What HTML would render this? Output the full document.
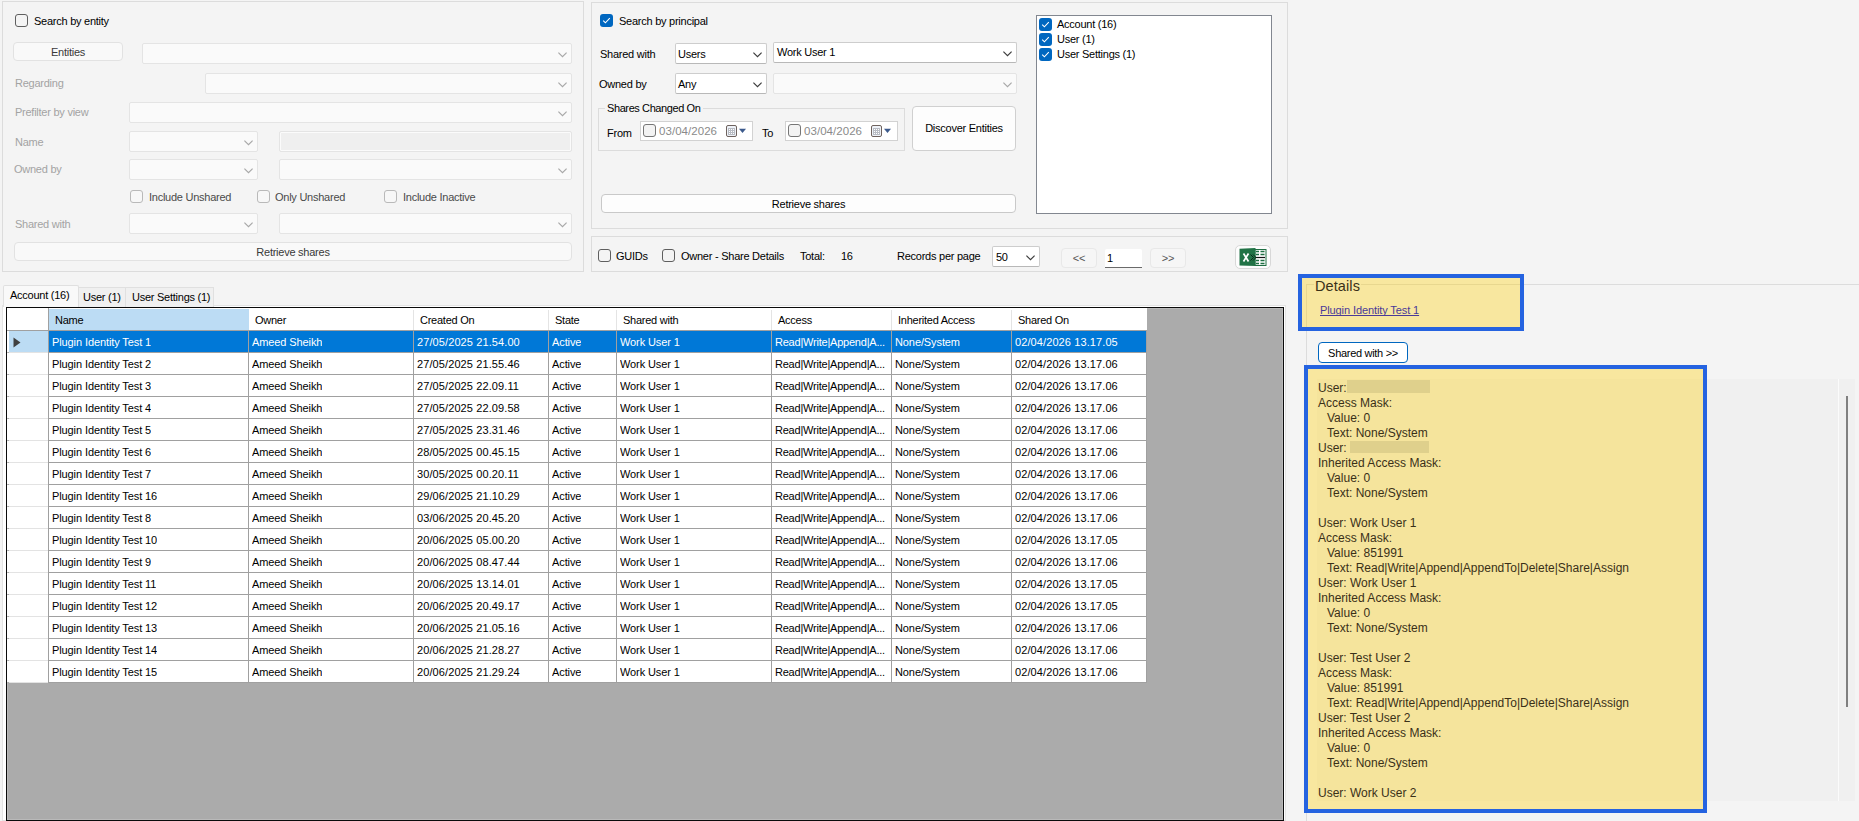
<!DOCTYPE html>
<html><head><meta charset="utf-8"><style>
*{box-sizing:border-box;margin:0;padding:0}
html,body{width:1859px;height:821px;overflow:hidden;background:#f4f4f4;font-family:"Liberation Sans",sans-serif;font-size:11px;color:#000}
.a{position:absolute}
.t{position:absolute;white-space:nowrap;line-height:14px;letter-spacing:-0.25px}
.grp{position:absolute;border:1px solid #dcdcdc}
.cb{position:absolute;width:13px;height:13px;border:1px solid #5f5f5f;border-radius:3px;background:#f4f4f4}
.cbd{border-color:#b9b9b9;background:#f7f7f7}
.cbk{position:absolute;width:13px;height:13px;border-radius:3px;background:#0067c0}
.cbk svg{position:absolute;left:0;top:0}
.combo{position:absolute;border:1px solid #e4e4e4;background:#fafafa;border-radius:2px}
.combo.en{border-color:#cdcdcd;background:#fff;border-bottom-color:#b8b8b8}
.chev{position:absolute;right:4px;top:7.5px}
.btn{position:absolute;border:1px solid #d0d0d0;border-radius:4px;background:#fbfbfb}
.btn span{position:absolute;left:0;right:0;text-align:center;white-space:nowrap;line-height:14px;letter-spacing:-0.25px}
.dis{color:#a3a3a3}
.g{position:absolute;background:#a0a0a0}
.cell{position:absolute;white-space:nowrap;line-height:14px;overflow:hidden;letter-spacing:-0.1px}
</style></head><body>
<div class="grp" style="left:2px;top:1px;width:582px;height:271px"></div>
<div class="cb" style="left:15px;top:14px"></div>
<div class="t" style="left:34px;top:14px;">Search by entity</div>
<div class="btn" style="left:13px;top:42px;width:110px;height:19px;border-color:#e2e2e2;background:#f9f9f9"><span style="top:2px;color:#3a3a3a">Entities</span></div>
<div class="combo" style="left:142px;top:43px;width:430px;height:21px;"><svg class="chev" width="9" height="6" viewBox="0 0 9 6"><path d="M0.4 0.6 L4.5 4.7 L8.6 0.6" stroke="#a8a8a8" stroke-width="1.15" fill="none"/></svg></div>
<div class="t" style="left:15px;top:76px;color:#a3a3a3">Regarding</div>
<div class="combo" style="left:205px;top:73px;width:367px;height:21px;"><svg class="chev" width="9" height="6" viewBox="0 0 9 6"><path d="M0.4 0.6 L4.5 4.7 L8.6 0.6" stroke="#a8a8a8" stroke-width="1.15" fill="none"/></svg></div>
<div class="t" style="left:15px;top:105px;color:#a3a3a3">Prefilter by view</div>
<div class="combo" style="left:129px;top:102px;width:443px;height:21px;"><svg class="chev" width="9" height="6" viewBox="0 0 9 6"><path d="M0.4 0.6 L4.5 4.7 L8.6 0.6" stroke="#a8a8a8" stroke-width="1.15" fill="none"/></svg></div>
<div class="t" style="left:15px;top:135px;color:#a3a3a3">Name</div>
<div class="combo" style="left:129px;top:131px;width:129px;height:21px;"><svg class="chev" width="9" height="6" viewBox="0 0 9 6"><path d="M0.4 0.6 L4.5 4.7 L8.6 0.6" stroke="#a8a8a8" stroke-width="1.15" fill="none"/></svg></div>
<div class="a" style="left:279px;top:131px;width:293px;height:21px;border:1px solid #e4e4e4;background:#efefef;border-radius:2px;box-shadow:inset 0 0 0 1px #fbfbfb"></div>
<div class="t" style="left:14px;top:162px;color:#a3a3a3">Owned by</div>
<div class="combo" style="left:129px;top:159px;width:129px;height:21px;"><svg class="chev" width="9" height="6" viewBox="0 0 9 6"><path d="M0.4 0.6 L4.5 4.7 L8.6 0.6" stroke="#a8a8a8" stroke-width="1.15" fill="none"/></svg></div>
<div class="combo" style="left:279px;top:159px;width:293px;height:21px;"><svg class="chev" width="9" height="6" viewBox="0 0 9 6"><path d="M0.4 0.6 L4.5 4.7 L8.6 0.6" stroke="#a8a8a8" stroke-width="1.15" fill="none"/></svg></div>
<div class="cb cbd" style="left:130px;top:190px"></div>
<div class="t" style="left:149px;top:190px;color:#4a4a4a">Include Unshared</div>
<div class="cb cbd" style="left:257px;top:190px"></div>
<div class="t" style="left:275px;top:190px;color:#4a4a4a">Only Unshared</div>
<div class="cb cbd" style="left:384px;top:190px"></div>
<div class="t" style="left:403px;top:190px;color:#4a4a4a">Include Inactive</div>
<div class="t" style="left:15px;top:217px;color:#a3a3a3">Shared with</div>
<div class="combo" style="left:129px;top:213px;width:129px;height:21px;"><svg class="chev" width="9" height="6" viewBox="0 0 9 6"><path d="M0.4 0.6 L4.5 4.7 L8.6 0.6" stroke="#a8a8a8" stroke-width="1.15" fill="none"/></svg></div>
<div class="combo" style="left:279px;top:213px;width:293px;height:21px;"><svg class="chev" width="9" height="6" viewBox="0 0 9 6"><path d="M0.4 0.6 L4.5 4.7 L8.6 0.6" stroke="#a8a8a8" stroke-width="1.15" fill="none"/></svg></div>
<div class="btn" style="left:14px;top:242px;width:558px;height:19px;border-color:#e2e2e2;background:#f9f9f9"><span style="top:2px;color:#3a3a3a">Retrieve shares</span></div>
<div class="grp" style="left:591px;top:2px;width:697px;height:227px"></div>
<div class="cbk" style="left:600px;top:14px"><svg width="13" height="13" viewBox="0 0 13 13"><path d="M3.2 6.6 L5.4 8.8 L9.8 4.2" stroke="#fff" stroke-width="1.1" fill="none"/></svg></div>
<div class="t" style="left:619px;top:14px;">Search by principal</div>
<div class="t" style="left:600px;top:47px;">Shared with</div>
<div class="combo en" style="left:675px;top:43px;width:92px;height:21px;"><span class="t" style="left:2px;top:3px">Users</span><svg class="chev" width="9" height="6" viewBox="0 0 9 6"><path d="M0.4 0.6 L4.5 4.7 L8.6 0.6" stroke="#3c3c3c" stroke-width="1.15" fill="none"/></svg></div>
<div class="combo en" style="left:773px;top:42px;width:244px;height:21px;"><span class="t" style="left:3px;top:2px">Work User 1</span><svg class="chev" width="9" height="6" viewBox="0 0 9 6"><path d="M0.4 0.6 L4.5 4.7 L8.6 0.6" stroke="#3c3c3c" stroke-width="1.15" fill="none"/></svg></div>
<div class="t" style="left:599px;top:77px;">Owned by</div>
<div class="combo en" style="left:675px;top:73px;width:92px;height:21px;"><span class="t" style="left:2px;top:3px">Any</span><svg class="chev" width="9" height="6" viewBox="0 0 9 6"><path d="M0.4 0.6 L4.5 4.7 L8.6 0.6" stroke="#3c3c3c" stroke-width="1.15" fill="none"/></svg></div>
<div class="combo" style="left:773px;top:73px;width:244px;height:21px;"><svg class="chev" width="9" height="6" viewBox="0 0 9 6"><path d="M0.4 0.6 L4.5 4.7 L8.6 0.6" stroke="#a8a8a8" stroke-width="1.15" fill="none"/></svg></div>
<div class="grp" style="left:598px;top:108px;width:307px;height:43px"></div>
<div class="t" style="left:605px;top:101px;padding:0 2px;background:#f4f4f4;letter-spacing:-0.4px">Shares Changed On</div>
<div class="t" style="left:607px;top:126px;">From</div>
<div class="t" style="left:762px;top:126px;">To</div>
<div class="a" style="left:640px;top:121px;width:113px;height:20px;border:1px solid #d2d2d2;background:#fff"></div>
<div class="cb" style="left:643px;top:124px;border-color:#767676;background:#f3f3f3"></div>
<div class="t" style="left:659px;top:124px;color:#8a8a8a;font-size:11.5px;letter-spacing:0.05px">03/04/2026</div>
<svg class="a" style="left:726px;top:125px" width="21" height="12" viewBox="0 0 21 12"><rect x="0.5" y="0.5" width="10" height="11" rx="1.5" fill="#eef2f8" stroke="#6e625e"/><rect x="2" y="3" width="7" height="7" fill="#b8bcc4"/><rect x="3" y="4" width="1" height="1" fill="#fff"/><rect x="3" y="6" width="1" height="1" fill="#fff"/><rect x="3" y="8" width="1" height="1" fill="#fff"/><rect x="5" y="4" width="1" height="1" fill="#fff"/><rect x="5" y="6" width="1" height="1" fill="#fff"/><rect x="5" y="8" width="1" height="1" fill="#fff"/><rect x="7" y="4" width="1" height="1" fill="#fff"/><rect x="7" y="6" width="1" height="1" fill="#fff"/><rect x="7" y="8" width="1" height="1" fill="#fff"/><path d="M13 3.8 L20 3.8 L16.5 8 Z" fill="#3c5a8c"/></svg>
<div class="a" style="left:785px;top:121px;width:113px;height:20px;border:1px solid #d2d2d2;background:#fff"></div>
<div class="cb" style="left:788px;top:124px;border-color:#767676;background:#f3f3f3"></div>
<div class="t" style="left:804px;top:124px;color:#8a8a8a;font-size:11.5px;letter-spacing:0.05px">03/04/2026</div>
<svg class="a" style="left:871px;top:125px" width="21" height="12" viewBox="0 0 21 12"><rect x="0.5" y="0.5" width="10" height="11" rx="1.5" fill="#eef2f8" stroke="#6e625e"/><rect x="2" y="3" width="7" height="7" fill="#b8bcc4"/><rect x="3" y="4" width="1" height="1" fill="#fff"/><rect x="3" y="6" width="1" height="1" fill="#fff"/><rect x="3" y="8" width="1" height="1" fill="#fff"/><rect x="5" y="4" width="1" height="1" fill="#fff"/><rect x="5" y="6" width="1" height="1" fill="#fff"/><rect x="5" y="8" width="1" height="1" fill="#fff"/><rect x="7" y="4" width="1" height="1" fill="#fff"/><rect x="7" y="6" width="1" height="1" fill="#fff"/><rect x="7" y="8" width="1" height="1" fill="#fff"/><path d="M13 3.8 L20 3.8 L16.5 8 Z" fill="#3c5a8c"/></svg>
<div class="btn" style="left:912px;top:106px;width:104px;height:45px;border-color:#d0d0d0;background:#fdfdfd"><span style="top:14px;">Discover Entities</span></div>
<div class="btn" style="left:601px;top:194px;width:415px;height:19px;border-color:#c9c9c9;background:#fdfdfd"><span style="top:2px;">Retrieve shares</span></div>
<div class="a" style="left:1036px;top:15px;width:236px;height:199px;border:1px solid #828790;background:#fff"></div>
<div class="cbk" style="left:1039px;top:18px"><svg width="13" height="13" viewBox="0 0 13 13"><path d="M3.2 6.6 L5.4 8.8 L9.8 4.2" stroke="#fff" stroke-width="1.1" fill="none"/></svg></div>
<div class="t" style="left:1057px;top:17px;">Account (16)</div>
<div class="cbk" style="left:1039px;top:33px"><svg width="13" height="13" viewBox="0 0 13 13"><path d="M3.2 6.6 L5.4 8.8 L9.8 4.2" stroke="#fff" stroke-width="1.1" fill="none"/></svg></div>
<div class="t" style="left:1057px;top:32px;">User (1)</div>
<div class="cbk" style="left:1039px;top:48px"><svg width="13" height="13" viewBox="0 0 13 13"><path d="M3.2 6.6 L5.4 8.8 L9.8 4.2" stroke="#fff" stroke-width="1.1" fill="none"/></svg></div>
<div class="t" style="left:1057px;top:47px;">User Settings (1)</div>
<div class="grp" style="left:591px;top:236px;width:697px;height:36px"></div>
<div class="cb" style="left:598px;top:249px"></div>
<div class="t" style="left:616px;top:249px;">GUIDs</div>
<div class="cb" style="left:662px;top:249px"></div>
<div class="t" style="left:681px;top:249px;">Owner - Share Details</div>
<div class="t" style="left:800px;top:249px;">Total:</div>
<div class="t" style="left:841px;top:249px;">16</div>
<div class="t" style="left:897px;top:249px;">Records per page</div>
<div class="combo en" style="left:992px;top:246px;width:48px;height:21px;"><span class="t" style="left:3px;top:3px">50</span><svg class="chev" width="9" height="6" viewBox="0 0 9 6"><path d="M0.4 0.6 L4.5 4.7 L8.6 0.6" stroke="#3c3c3c" stroke-width="1.15" fill="none"/></svg></div>
<div class="btn" style="left:1061px;top:248px;width:36px;height:20px;border-color:#e8e8e8;background:#f6f6f6"><span style="top:2px;color:#555">&lt;&lt;</span></div>
<div class="a" style="left:1105px;top:249px;width:37px;height:19px;background:#fff;border-bottom:1px solid #6a6a6a;border-radius:2px 2px 0 0"></div>
<div class="t" style="left:1107px;top:251px;">1</div>
<div class="btn" style="left:1150px;top:248px;width:36px;height:20px;border-color:#e8e8e8;background:#f6f6f6"><span style="top:2px;color:#555">&gt;&gt;</span></div>
<div class="btn" style="left:1235px;top:245px;width:36px;height:24px;border-color:#d8d8d8;background:#fdfdfd;border-radius:5px"><span style="top:0px;"></span></div>
<svg class="a" style="left:1239px;top:247px" width="29" height="21" viewBox="0 0 29 21"><rect x="16" y="2.5" width="11" height="16" fill="#fff" stroke="#1f6f43" stroke-width="1"/><path d="M17 4.5h3M21.5 4.5h4M17 7.5h3M21.5 7.5h4M17 13.5h3M21.5 13.5h4M17 16.5h3M21.5 16.5h4" stroke="#1f6f43" stroke-width="1.6"/><path d="M16 10.5h10" stroke="#111" stroke-width="1.2"/><path d="M0.5 1.8 L16.5 1 L16.5 19 L0.5 18.6 Z" fill="#217346"/><path d="M4.5 6.5 L9.5 14.5 M9.5 6.5 L4.5 14.5" stroke="#fff" stroke-width="1.7"/><path d="M11.5 7.5 L14.5 10.5 L11.5 13.5 M14 7.5 L17 10.5 L14 13.5" stroke="#0a2a18" stroke-width="1" fill="none"/></svg>
<div class="a" style="left:2px;top:305px;width:1284px;height:516px;border:1px solid #e3e3e3;background:#fff"></div>
<div class="a" style="left:3px;top:285px;width:76px;height:22px;border:1px solid #e0e0e0;border-bottom:none;background:#f9f9f9;border-radius:2px 2px 0 0"></div>
<div class="t" style="left:10px;top:288px;">Account (16)</div>
<div class="a" style="left:78px;top:287px;width:48px;height:20px;border:1px solid #e0e0e0;border-bottom:none;background:#f0f0f0"></div>
<div class="t" style="left:83px;top:290px;">User (1)</div>
<div class="a" style="left:125px;top:287px;width:89px;height:20px;border:1px solid #e0e0e0;border-bottom:none;background:#f0f0f0"></div>
<div class="t" style="left:132px;top:290px;">User Settings (1)</div>
<div class="a" style="left:6px;top:307px;width:1278px;height:514px;border:1px solid #0a0a0a;background:#ababab;box-shadow:inset 1px 1px 0 #b9b9b9, inset -1px -1px 0 #b9b9b9"></div>
<div class="a" style="left:7px;top:308px;width:1140px;height:22px;background:#fff"></div>
<div class="a" style="left:49px;top:309px;width:200px;height:21px;background:#bcdcf4"></div>
<div class="a" style="left:7px;top:330px;width:1140px;height:1px;background:#a0a0a0"></div>
<div class="a" style="left:48px;top:308px;width:1px;height:23px;background:#a0a0a0"></div>
<div class="a" style="left:413px;top:310px;width:1px;height:20px;background:#e4e4e4"></div>
<div class="a" style="left:548px;top:310px;width:1px;height:20px;background:#e4e4e4"></div>
<div class="a" style="left:616px;top:310px;width:1px;height:20px;background:#e4e4e4"></div>
<div class="a" style="left:771px;top:310px;width:1px;height:20px;background:#e4e4e4"></div>
<div class="a" style="left:891px;top:310px;width:1px;height:20px;background:#e4e4e4"></div>
<div class="a" style="left:1011px;top:310px;width:1px;height:20px;background:#e4e4e4"></div>
<div class="t" style="left:55px;top:313px;">Name</div>
<div class="t" style="left:255px;top:313px;">Owner</div>
<div class="t" style="left:420px;top:313px;">Created On</div>
<div class="t" style="left:555px;top:313px;">State</div>
<div class="t" style="left:623px;top:313px;">Shared with</div>
<div class="t" style="left:778px;top:313px;">Access</div>
<div class="t" style="left:898px;top:313px;">Inherited Access</div>
<div class="t" style="left:1018px;top:313px;">Shared On</div>
<div class="a" style="left:7px;top:331px;width:41px;height:21px;background:#fff"></div>
<div class="a" style="left:9px;top:331px;width:39px;height:21px;background:#bcdcf4"></div>
<svg class="a" style="left:13px;top:337px" width="8" height="11" viewBox="0 0 8 11"><path d="M0.5 0.5 L7.5 5.5 L0.5 10.5 Z" fill="#404040"/></svg>
<div class="a" style="left:9px;top:352px;width:39px;height:1px;background:#e3e3e3"></div>
<div class="a" style="left:49px;top:331px;width:1097px;height:21px;background:#0078d7"></div>
<div class="a" style="left:49px;top:352px;width:1098px;height:1px;background:#a0a0a0"></div>
<div class="cell" style="left:52px;top:335px;color:#fff;letter-spacing:-0.1px">Plugin Identity Test 1</div>
<div class="cell" style="left:252px;top:335px;color:#fff;letter-spacing:-0.1px">Ameed Sheikh</div>
<div class="cell" style="left:417px;top:335px;color:#fff;letter-spacing:0.1px">27/05/2025 21.54.00</div>
<div class="cell" style="left:552px;top:335px;color:#fff;letter-spacing:-0.1px">Active</div>
<div class="cell" style="left:620px;top:335px;color:#fff;letter-spacing:-0.1px">Work User 1</div>
<div class="cell" style="left:775px;top:335px;color:#fff;letter-spacing:-0.22px">Read|Write|Append|A...</div>
<div class="cell" style="left:895px;top:335px;color:#fff;letter-spacing:-0.1px">None/System</div>
<div class="cell" style="left:1015px;top:335px;color:#fff;letter-spacing:0.1px">02/04/2026 13.17.05</div>
<div class="a" style="left:7px;top:353px;width:41px;height:21px;background:#fff"></div>
<div class="a" style="left:9px;top:374px;width:39px;height:1px;background:#e3e3e3"></div>
<div class="a" style="left:49px;top:353px;width:1097px;height:21px;background:#fff"></div>
<div class="a" style="left:49px;top:374px;width:1098px;height:1px;background:#a0a0a0"></div>
<div class="cell" style="left:52px;top:357px;color:#000;letter-spacing:-0.1px">Plugin Identity Test 2</div>
<div class="cell" style="left:252px;top:357px;color:#000;letter-spacing:-0.1px">Ameed Sheikh</div>
<div class="cell" style="left:417px;top:357px;color:#000;letter-spacing:0.1px">27/05/2025 21.55.46</div>
<div class="cell" style="left:552px;top:357px;color:#000;letter-spacing:-0.1px">Active</div>
<div class="cell" style="left:620px;top:357px;color:#000;letter-spacing:-0.1px">Work User 1</div>
<div class="cell" style="left:775px;top:357px;color:#000;letter-spacing:-0.22px">Read|Write|Append|A...</div>
<div class="cell" style="left:895px;top:357px;color:#000;letter-spacing:-0.1px">None/System</div>
<div class="cell" style="left:1015px;top:357px;color:#000;letter-spacing:0.1px">02/04/2026 13.17.06</div>
<div class="a" style="left:7px;top:375px;width:41px;height:21px;background:#fff"></div>
<div class="a" style="left:9px;top:396px;width:39px;height:1px;background:#e3e3e3"></div>
<div class="a" style="left:49px;top:375px;width:1097px;height:21px;background:#fff"></div>
<div class="a" style="left:49px;top:396px;width:1098px;height:1px;background:#a0a0a0"></div>
<div class="cell" style="left:52px;top:379px;color:#000;letter-spacing:-0.1px">Plugin Identity Test 3</div>
<div class="cell" style="left:252px;top:379px;color:#000;letter-spacing:-0.1px">Ameed Sheikh</div>
<div class="cell" style="left:417px;top:379px;color:#000;letter-spacing:0.1px">27/05/2025 22.09.11</div>
<div class="cell" style="left:552px;top:379px;color:#000;letter-spacing:-0.1px">Active</div>
<div class="cell" style="left:620px;top:379px;color:#000;letter-spacing:-0.1px">Work User 1</div>
<div class="cell" style="left:775px;top:379px;color:#000;letter-spacing:-0.22px">Read|Write|Append|A...</div>
<div class="cell" style="left:895px;top:379px;color:#000;letter-spacing:-0.1px">None/System</div>
<div class="cell" style="left:1015px;top:379px;color:#000;letter-spacing:0.1px">02/04/2026 13.17.06</div>
<div class="a" style="left:7px;top:397px;width:41px;height:21px;background:#fff"></div>
<div class="a" style="left:9px;top:418px;width:39px;height:1px;background:#e3e3e3"></div>
<div class="a" style="left:49px;top:397px;width:1097px;height:21px;background:#fff"></div>
<div class="a" style="left:49px;top:418px;width:1098px;height:1px;background:#a0a0a0"></div>
<div class="cell" style="left:52px;top:401px;color:#000;letter-spacing:-0.1px">Plugin Identity Test 4</div>
<div class="cell" style="left:252px;top:401px;color:#000;letter-spacing:-0.1px">Ameed Sheikh</div>
<div class="cell" style="left:417px;top:401px;color:#000;letter-spacing:0.1px">27/05/2025 22.09.58</div>
<div class="cell" style="left:552px;top:401px;color:#000;letter-spacing:-0.1px">Active</div>
<div class="cell" style="left:620px;top:401px;color:#000;letter-spacing:-0.1px">Work User 1</div>
<div class="cell" style="left:775px;top:401px;color:#000;letter-spacing:-0.22px">Read|Write|Append|A...</div>
<div class="cell" style="left:895px;top:401px;color:#000;letter-spacing:-0.1px">None/System</div>
<div class="cell" style="left:1015px;top:401px;color:#000;letter-spacing:0.1px">02/04/2026 13.17.06</div>
<div class="a" style="left:7px;top:419px;width:41px;height:21px;background:#fff"></div>
<div class="a" style="left:9px;top:440px;width:39px;height:1px;background:#e3e3e3"></div>
<div class="a" style="left:49px;top:419px;width:1097px;height:21px;background:#fff"></div>
<div class="a" style="left:49px;top:440px;width:1098px;height:1px;background:#a0a0a0"></div>
<div class="cell" style="left:52px;top:423px;color:#000;letter-spacing:-0.1px">Plugin Identity Test 5</div>
<div class="cell" style="left:252px;top:423px;color:#000;letter-spacing:-0.1px">Ameed Sheikh</div>
<div class="cell" style="left:417px;top:423px;color:#000;letter-spacing:0.1px">27/05/2025 23.31.46</div>
<div class="cell" style="left:552px;top:423px;color:#000;letter-spacing:-0.1px">Active</div>
<div class="cell" style="left:620px;top:423px;color:#000;letter-spacing:-0.1px">Work User 1</div>
<div class="cell" style="left:775px;top:423px;color:#000;letter-spacing:-0.22px">Read|Write|Append|A...</div>
<div class="cell" style="left:895px;top:423px;color:#000;letter-spacing:-0.1px">None/System</div>
<div class="cell" style="left:1015px;top:423px;color:#000;letter-spacing:0.1px">02/04/2026 13.17.06</div>
<div class="a" style="left:7px;top:441px;width:41px;height:21px;background:#fff"></div>
<div class="a" style="left:9px;top:462px;width:39px;height:1px;background:#e3e3e3"></div>
<div class="a" style="left:49px;top:441px;width:1097px;height:21px;background:#fff"></div>
<div class="a" style="left:49px;top:462px;width:1098px;height:1px;background:#a0a0a0"></div>
<div class="cell" style="left:52px;top:445px;color:#000;letter-spacing:-0.1px">Plugin Identity Test 6</div>
<div class="cell" style="left:252px;top:445px;color:#000;letter-spacing:-0.1px">Ameed Sheikh</div>
<div class="cell" style="left:417px;top:445px;color:#000;letter-spacing:0.1px">28/05/2025 00.45.15</div>
<div class="cell" style="left:552px;top:445px;color:#000;letter-spacing:-0.1px">Active</div>
<div class="cell" style="left:620px;top:445px;color:#000;letter-spacing:-0.1px">Work User 1</div>
<div class="cell" style="left:775px;top:445px;color:#000;letter-spacing:-0.22px">Read|Write|Append|A...</div>
<div class="cell" style="left:895px;top:445px;color:#000;letter-spacing:-0.1px">None/System</div>
<div class="cell" style="left:1015px;top:445px;color:#000;letter-spacing:0.1px">02/04/2026 13.17.06</div>
<div class="a" style="left:7px;top:463px;width:41px;height:21px;background:#fff"></div>
<div class="a" style="left:9px;top:484px;width:39px;height:1px;background:#e3e3e3"></div>
<div class="a" style="left:49px;top:463px;width:1097px;height:21px;background:#fff"></div>
<div class="a" style="left:49px;top:484px;width:1098px;height:1px;background:#a0a0a0"></div>
<div class="cell" style="left:52px;top:467px;color:#000;letter-spacing:-0.1px">Plugin Identity Test 7</div>
<div class="cell" style="left:252px;top:467px;color:#000;letter-spacing:-0.1px">Ameed Sheikh</div>
<div class="cell" style="left:417px;top:467px;color:#000;letter-spacing:0.1px">30/05/2025 00.20.11</div>
<div class="cell" style="left:552px;top:467px;color:#000;letter-spacing:-0.1px">Active</div>
<div class="cell" style="left:620px;top:467px;color:#000;letter-spacing:-0.1px">Work User 1</div>
<div class="cell" style="left:775px;top:467px;color:#000;letter-spacing:-0.22px">Read|Write|Append|A...</div>
<div class="cell" style="left:895px;top:467px;color:#000;letter-spacing:-0.1px">None/System</div>
<div class="cell" style="left:1015px;top:467px;color:#000;letter-spacing:0.1px">02/04/2026 13.17.06</div>
<div class="a" style="left:7px;top:485px;width:41px;height:21px;background:#fff"></div>
<div class="a" style="left:9px;top:506px;width:39px;height:1px;background:#e3e3e3"></div>
<div class="a" style="left:49px;top:485px;width:1097px;height:21px;background:#fff"></div>
<div class="a" style="left:49px;top:506px;width:1098px;height:1px;background:#a0a0a0"></div>
<div class="cell" style="left:52px;top:489px;color:#000;letter-spacing:-0.1px">Plugin Identity Test 16</div>
<div class="cell" style="left:252px;top:489px;color:#000;letter-spacing:-0.1px">Ameed Sheikh</div>
<div class="cell" style="left:417px;top:489px;color:#000;letter-spacing:0.1px">29/06/2025 21.10.29</div>
<div class="cell" style="left:552px;top:489px;color:#000;letter-spacing:-0.1px">Active</div>
<div class="cell" style="left:620px;top:489px;color:#000;letter-spacing:-0.1px">Work User 1</div>
<div class="cell" style="left:775px;top:489px;color:#000;letter-spacing:-0.22px">Read|Write|Append|A...</div>
<div class="cell" style="left:895px;top:489px;color:#000;letter-spacing:-0.1px">None/System</div>
<div class="cell" style="left:1015px;top:489px;color:#000;letter-spacing:0.1px">02/04/2026 13.17.06</div>
<div class="a" style="left:7px;top:507px;width:41px;height:21px;background:#fff"></div>
<div class="a" style="left:9px;top:528px;width:39px;height:1px;background:#e3e3e3"></div>
<div class="a" style="left:49px;top:507px;width:1097px;height:21px;background:#fff"></div>
<div class="a" style="left:49px;top:528px;width:1098px;height:1px;background:#a0a0a0"></div>
<div class="cell" style="left:52px;top:511px;color:#000;letter-spacing:-0.1px">Plugin Identity Test 8</div>
<div class="cell" style="left:252px;top:511px;color:#000;letter-spacing:-0.1px">Ameed Sheikh</div>
<div class="cell" style="left:417px;top:511px;color:#000;letter-spacing:0.1px">03/06/2025 20.45.20</div>
<div class="cell" style="left:552px;top:511px;color:#000;letter-spacing:-0.1px">Active</div>
<div class="cell" style="left:620px;top:511px;color:#000;letter-spacing:-0.1px">Work User 1</div>
<div class="cell" style="left:775px;top:511px;color:#000;letter-spacing:-0.22px">Read|Write|Append|A...</div>
<div class="cell" style="left:895px;top:511px;color:#000;letter-spacing:-0.1px">None/System</div>
<div class="cell" style="left:1015px;top:511px;color:#000;letter-spacing:0.1px">02/04/2026 13.17.06</div>
<div class="a" style="left:7px;top:529px;width:41px;height:21px;background:#fff"></div>
<div class="a" style="left:9px;top:550px;width:39px;height:1px;background:#e3e3e3"></div>
<div class="a" style="left:49px;top:529px;width:1097px;height:21px;background:#fff"></div>
<div class="a" style="left:49px;top:550px;width:1098px;height:1px;background:#a0a0a0"></div>
<div class="cell" style="left:52px;top:533px;color:#000;letter-spacing:-0.1px">Plugin Identity Test 10</div>
<div class="cell" style="left:252px;top:533px;color:#000;letter-spacing:-0.1px">Ameed Sheikh</div>
<div class="cell" style="left:417px;top:533px;color:#000;letter-spacing:0.1px">20/06/2025 05.00.20</div>
<div class="cell" style="left:552px;top:533px;color:#000;letter-spacing:-0.1px">Active</div>
<div class="cell" style="left:620px;top:533px;color:#000;letter-spacing:-0.1px">Work User 1</div>
<div class="cell" style="left:775px;top:533px;color:#000;letter-spacing:-0.22px">Read|Write|Append|A...</div>
<div class="cell" style="left:895px;top:533px;color:#000;letter-spacing:-0.1px">None/System</div>
<div class="cell" style="left:1015px;top:533px;color:#000;letter-spacing:0.1px">02/04/2026 13.17.05</div>
<div class="a" style="left:7px;top:551px;width:41px;height:21px;background:#fff"></div>
<div class="a" style="left:9px;top:572px;width:39px;height:1px;background:#e3e3e3"></div>
<div class="a" style="left:49px;top:551px;width:1097px;height:21px;background:#fff"></div>
<div class="a" style="left:49px;top:572px;width:1098px;height:1px;background:#a0a0a0"></div>
<div class="cell" style="left:52px;top:555px;color:#000;letter-spacing:-0.1px">Plugin Identity Test 9</div>
<div class="cell" style="left:252px;top:555px;color:#000;letter-spacing:-0.1px">Ameed Sheikh</div>
<div class="cell" style="left:417px;top:555px;color:#000;letter-spacing:0.1px">20/06/2025 08.47.44</div>
<div class="cell" style="left:552px;top:555px;color:#000;letter-spacing:-0.1px">Active</div>
<div class="cell" style="left:620px;top:555px;color:#000;letter-spacing:-0.1px">Work User 1</div>
<div class="cell" style="left:775px;top:555px;color:#000;letter-spacing:-0.22px">Read|Write|Append|A...</div>
<div class="cell" style="left:895px;top:555px;color:#000;letter-spacing:-0.1px">None/System</div>
<div class="cell" style="left:1015px;top:555px;color:#000;letter-spacing:0.1px">02/04/2026 13.17.06</div>
<div class="a" style="left:7px;top:573px;width:41px;height:21px;background:#fff"></div>
<div class="a" style="left:9px;top:594px;width:39px;height:1px;background:#e3e3e3"></div>
<div class="a" style="left:49px;top:573px;width:1097px;height:21px;background:#fff"></div>
<div class="a" style="left:49px;top:594px;width:1098px;height:1px;background:#a0a0a0"></div>
<div class="cell" style="left:52px;top:577px;color:#000;letter-spacing:-0.1px">Plugin Identity Test 11</div>
<div class="cell" style="left:252px;top:577px;color:#000;letter-spacing:-0.1px">Ameed Sheikh</div>
<div class="cell" style="left:417px;top:577px;color:#000;letter-spacing:0.1px">20/06/2025 13.14.01</div>
<div class="cell" style="left:552px;top:577px;color:#000;letter-spacing:-0.1px">Active</div>
<div class="cell" style="left:620px;top:577px;color:#000;letter-spacing:-0.1px">Work User 1</div>
<div class="cell" style="left:775px;top:577px;color:#000;letter-spacing:-0.22px">Read|Write|Append|A...</div>
<div class="cell" style="left:895px;top:577px;color:#000;letter-spacing:-0.1px">None/System</div>
<div class="cell" style="left:1015px;top:577px;color:#000;letter-spacing:0.1px">02/04/2026 13.17.05</div>
<div class="a" style="left:7px;top:595px;width:41px;height:21px;background:#fff"></div>
<div class="a" style="left:9px;top:616px;width:39px;height:1px;background:#e3e3e3"></div>
<div class="a" style="left:49px;top:595px;width:1097px;height:21px;background:#fff"></div>
<div class="a" style="left:49px;top:616px;width:1098px;height:1px;background:#a0a0a0"></div>
<div class="cell" style="left:52px;top:599px;color:#000;letter-spacing:-0.1px">Plugin Identity Test 12</div>
<div class="cell" style="left:252px;top:599px;color:#000;letter-spacing:-0.1px">Ameed Sheikh</div>
<div class="cell" style="left:417px;top:599px;color:#000;letter-spacing:0.1px">20/06/2025 20.49.17</div>
<div class="cell" style="left:552px;top:599px;color:#000;letter-spacing:-0.1px">Active</div>
<div class="cell" style="left:620px;top:599px;color:#000;letter-spacing:-0.1px">Work User 1</div>
<div class="cell" style="left:775px;top:599px;color:#000;letter-spacing:-0.22px">Read|Write|Append|A...</div>
<div class="cell" style="left:895px;top:599px;color:#000;letter-spacing:-0.1px">None/System</div>
<div class="cell" style="left:1015px;top:599px;color:#000;letter-spacing:0.1px">02/04/2026 13.17.05</div>
<div class="a" style="left:7px;top:617px;width:41px;height:21px;background:#fff"></div>
<div class="a" style="left:9px;top:638px;width:39px;height:1px;background:#e3e3e3"></div>
<div class="a" style="left:49px;top:617px;width:1097px;height:21px;background:#fff"></div>
<div class="a" style="left:49px;top:638px;width:1098px;height:1px;background:#a0a0a0"></div>
<div class="cell" style="left:52px;top:621px;color:#000;letter-spacing:-0.1px">Plugin Identity Test 13</div>
<div class="cell" style="left:252px;top:621px;color:#000;letter-spacing:-0.1px">Ameed Sheikh</div>
<div class="cell" style="left:417px;top:621px;color:#000;letter-spacing:0.1px">20/06/2025 21.05.16</div>
<div class="cell" style="left:552px;top:621px;color:#000;letter-spacing:-0.1px">Active</div>
<div class="cell" style="left:620px;top:621px;color:#000;letter-spacing:-0.1px">Work User 1</div>
<div class="cell" style="left:775px;top:621px;color:#000;letter-spacing:-0.22px">Read|Write|Append|A...</div>
<div class="cell" style="left:895px;top:621px;color:#000;letter-spacing:-0.1px">None/System</div>
<div class="cell" style="left:1015px;top:621px;color:#000;letter-spacing:0.1px">02/04/2026 13.17.06</div>
<div class="a" style="left:7px;top:639px;width:41px;height:21px;background:#fff"></div>
<div class="a" style="left:9px;top:660px;width:39px;height:1px;background:#e3e3e3"></div>
<div class="a" style="left:49px;top:639px;width:1097px;height:21px;background:#fff"></div>
<div class="a" style="left:49px;top:660px;width:1098px;height:1px;background:#a0a0a0"></div>
<div class="cell" style="left:52px;top:643px;color:#000;letter-spacing:-0.1px">Plugin Identity Test 14</div>
<div class="cell" style="left:252px;top:643px;color:#000;letter-spacing:-0.1px">Ameed Sheikh</div>
<div class="cell" style="left:417px;top:643px;color:#000;letter-spacing:0.1px">20/06/2025 21.28.27</div>
<div class="cell" style="left:552px;top:643px;color:#000;letter-spacing:-0.1px">Active</div>
<div class="cell" style="left:620px;top:643px;color:#000;letter-spacing:-0.1px">Work User 1</div>
<div class="cell" style="left:775px;top:643px;color:#000;letter-spacing:-0.22px">Read|Write|Append|A...</div>
<div class="cell" style="left:895px;top:643px;color:#000;letter-spacing:-0.1px">None/System</div>
<div class="cell" style="left:1015px;top:643px;color:#000;letter-spacing:0.1px">02/04/2026 13.17.06</div>
<div class="a" style="left:7px;top:661px;width:41px;height:21px;background:#fff"></div>
<div class="a" style="left:9px;top:682px;width:39px;height:1px;background:#e3e3e3"></div>
<div class="a" style="left:49px;top:661px;width:1097px;height:21px;background:#fff"></div>
<div class="a" style="left:49px;top:682px;width:1098px;height:1px;background:#a0a0a0"></div>
<div class="cell" style="left:52px;top:665px;color:#000;letter-spacing:-0.1px">Plugin Identity Test 15</div>
<div class="cell" style="left:252px;top:665px;color:#000;letter-spacing:-0.1px">Ameed Sheikh</div>
<div class="cell" style="left:417px;top:665px;color:#000;letter-spacing:0.1px">20/06/2025 21.29.24</div>
<div class="cell" style="left:552px;top:665px;color:#000;letter-spacing:-0.1px">Active</div>
<div class="cell" style="left:620px;top:665px;color:#000;letter-spacing:-0.1px">Work User 1</div>
<div class="cell" style="left:775px;top:665px;color:#000;letter-spacing:-0.22px">Read|Write|Append|A...</div>
<div class="cell" style="left:895px;top:665px;color:#000;letter-spacing:-0.1px">None/System</div>
<div class="cell" style="left:1015px;top:665px;color:#000;letter-spacing:0.1px">02/04/2026 13.17.06</div>
<div class="a" style="left:48px;top:331px;width:1px;height:352px;background:#a0a0a0"></div>
<div class="a" style="left:248px;top:331px;width:1px;height:352px;background:#a0a0a0"></div>
<div class="a" style="left:413px;top:331px;width:1px;height:352px;background:#a0a0a0"></div>
<div class="a" style="left:548px;top:331px;width:1px;height:352px;background:#a0a0a0"></div>
<div class="a" style="left:616px;top:331px;width:1px;height:352px;background:#a0a0a0"></div>
<div class="a" style="left:771px;top:331px;width:1px;height:352px;background:#a0a0a0"></div>
<div class="a" style="left:891px;top:331px;width:1px;height:352px;background:#a0a0a0"></div>
<div class="a" style="left:1011px;top:331px;width:1px;height:352px;background:#a0a0a0"></div>
<div class="a" style="left:1146px;top:331px;width:1px;height:352px;background:#a0a0a0"></div>
<div class="a" style="left:1306px;top:284px;width:1px;height:537px;background:#dcdcdc"></div>
<div class="a" style="left:1306px;top:284px;width:8px;height:1px;background:#dcdcdc"></div>
<div class="a" style="left:1361px;top:284px;width:498px;height:1px;background:#dcdcdc"></div>
<div class="a" style="left:1302px;top:278px;width:218px;height:49px;background:rgba(255,208,8,0.36)"></div>
<div class="t" style="left:1315px;top:277px;font-size:14.5px;line-height:18px;color:#3a3018;letter-spacing:0.1px">Details</div>
<div class="t" style="left:1320px;top:303px;color:#4a3a98;letter-spacing:-0.1px;text-decoration:underline;text-decoration-skip-ink:none">Plugin Identity Test 1</div>
<div class="btn" style="left:1318px;top:342px;width:90px;height:21px;border-color:#0067c0;background:#fff;border-radius:4px"><span style="top:3px;letter-spacing:-0.3px">Shared with &gt;&gt;</span></div>
<div class="a" style="left:1317px;top:379px;width:538px;height:422px;background:#f0f0f0"></div>
<div class="a" style="left:1838px;top:379px;width:1px;height:422px;background:#fbfbfb"></div>
<div class="a" style="left:1846px;top:396px;width:2px;height:311px;background:#808080"></div>
<div class="a" style="left:1308px;top:369px;width:395px;height:440px;background:rgba(255,208,8,0.36)"></div>
<div class="t" style="left:1318px;top:381px;font-size:12px;line-height:15px;letter-spacing:0;color:#3a3018">User:</div>
<div class="t" style="left:1318px;top:396px;font-size:12px;line-height:15px;letter-spacing:0;color:#3a3018">Access Mask:</div>
<div class="t" style="left:1327px;top:411px;font-size:12px;line-height:15px;letter-spacing:0;color:#3a3018">Value: 0</div>
<div class="t" style="left:1327px;top:426px;font-size:12px;line-height:15px;letter-spacing:0;color:#3a3018">Text: None/System</div>
<div class="t" style="left:1318px;top:441px;font-size:12px;line-height:15px;letter-spacing:0;color:#3a3018">User: </div>
<div class="t" style="left:1318px;top:456px;font-size:12px;line-height:15px;letter-spacing:0;color:#3a3018">Inherited Access Mask:</div>
<div class="t" style="left:1327px;top:471px;font-size:12px;line-height:15px;letter-spacing:0;color:#3a3018">Value: 0</div>
<div class="t" style="left:1327px;top:486px;font-size:12px;line-height:15px;letter-spacing:0;color:#3a3018">Text: None/System</div>
<div class="t" style="left:1318px;top:516px;font-size:12px;line-height:15px;letter-spacing:0;color:#3a3018">User: Work User 1</div>
<div class="t" style="left:1318px;top:531px;font-size:12px;line-height:15px;letter-spacing:0;color:#3a3018">Access Mask:</div>
<div class="t" style="left:1327px;top:546px;font-size:12px;line-height:15px;letter-spacing:0;color:#3a3018">Value: 851991</div>
<div class="t" style="left:1327px;top:561px;font-size:12px;line-height:15px;letter-spacing:0;color:#3a3018">Text: Read|Write|Append|AppendTo|Delete|Share|Assign</div>
<div class="t" style="left:1318px;top:576px;font-size:12px;line-height:15px;letter-spacing:0;color:#3a3018">User: Work User 1</div>
<div class="t" style="left:1318px;top:591px;font-size:12px;line-height:15px;letter-spacing:0;color:#3a3018">Inherited Access Mask:</div>
<div class="t" style="left:1327px;top:606px;font-size:12px;line-height:15px;letter-spacing:0;color:#3a3018">Value: 0</div>
<div class="t" style="left:1327px;top:621px;font-size:12px;line-height:15px;letter-spacing:0;color:#3a3018">Text: None/System</div>
<div class="t" style="left:1318px;top:651px;font-size:12px;line-height:15px;letter-spacing:0;color:#3a3018">User: Test User 2</div>
<div class="t" style="left:1318px;top:666px;font-size:12px;line-height:15px;letter-spacing:0;color:#3a3018">Access Mask:</div>
<div class="t" style="left:1327px;top:681px;font-size:12px;line-height:15px;letter-spacing:0;color:#3a3018">Value: 851991</div>
<div class="t" style="left:1327px;top:696px;font-size:12px;line-height:15px;letter-spacing:0;color:#3a3018">Text: Read|Write|Append|AppendTo|Delete|Share|Assign</div>
<div class="t" style="left:1318px;top:711px;font-size:12px;line-height:15px;letter-spacing:0;color:#3a3018">User: Test User 2</div>
<div class="t" style="left:1318px;top:726px;font-size:12px;line-height:15px;letter-spacing:0;color:#3a3018">Inherited Access Mask:</div>
<div class="t" style="left:1327px;top:741px;font-size:12px;line-height:15px;letter-spacing:0;color:#3a3018">Value: 0</div>
<div class="t" style="left:1327px;top:756px;font-size:12px;line-height:15px;letter-spacing:0;color:#3a3018">Text: None/System</div>
<div class="t" style="left:1318px;top:786px;font-size:12px;line-height:15px;letter-spacing:0;color:#3a3018">User: Work User 2</div>
<div class="a" style="left:1347px;top:380px;width:83px;height:13px;background:#dfd08c"></div>
<div class="a" style="left:1350px;top:441px;width:79px;height:12px;background:#dfd08c"></div>
<div class="a" style="left:1298px;top:274px;width:226px;height:57px;border:4px solid #2563e0"></div>
<div class="a" style="left:1304px;top:365px;width:403px;height:448px;border:4px solid #2563e0"></div>
</body></html>
